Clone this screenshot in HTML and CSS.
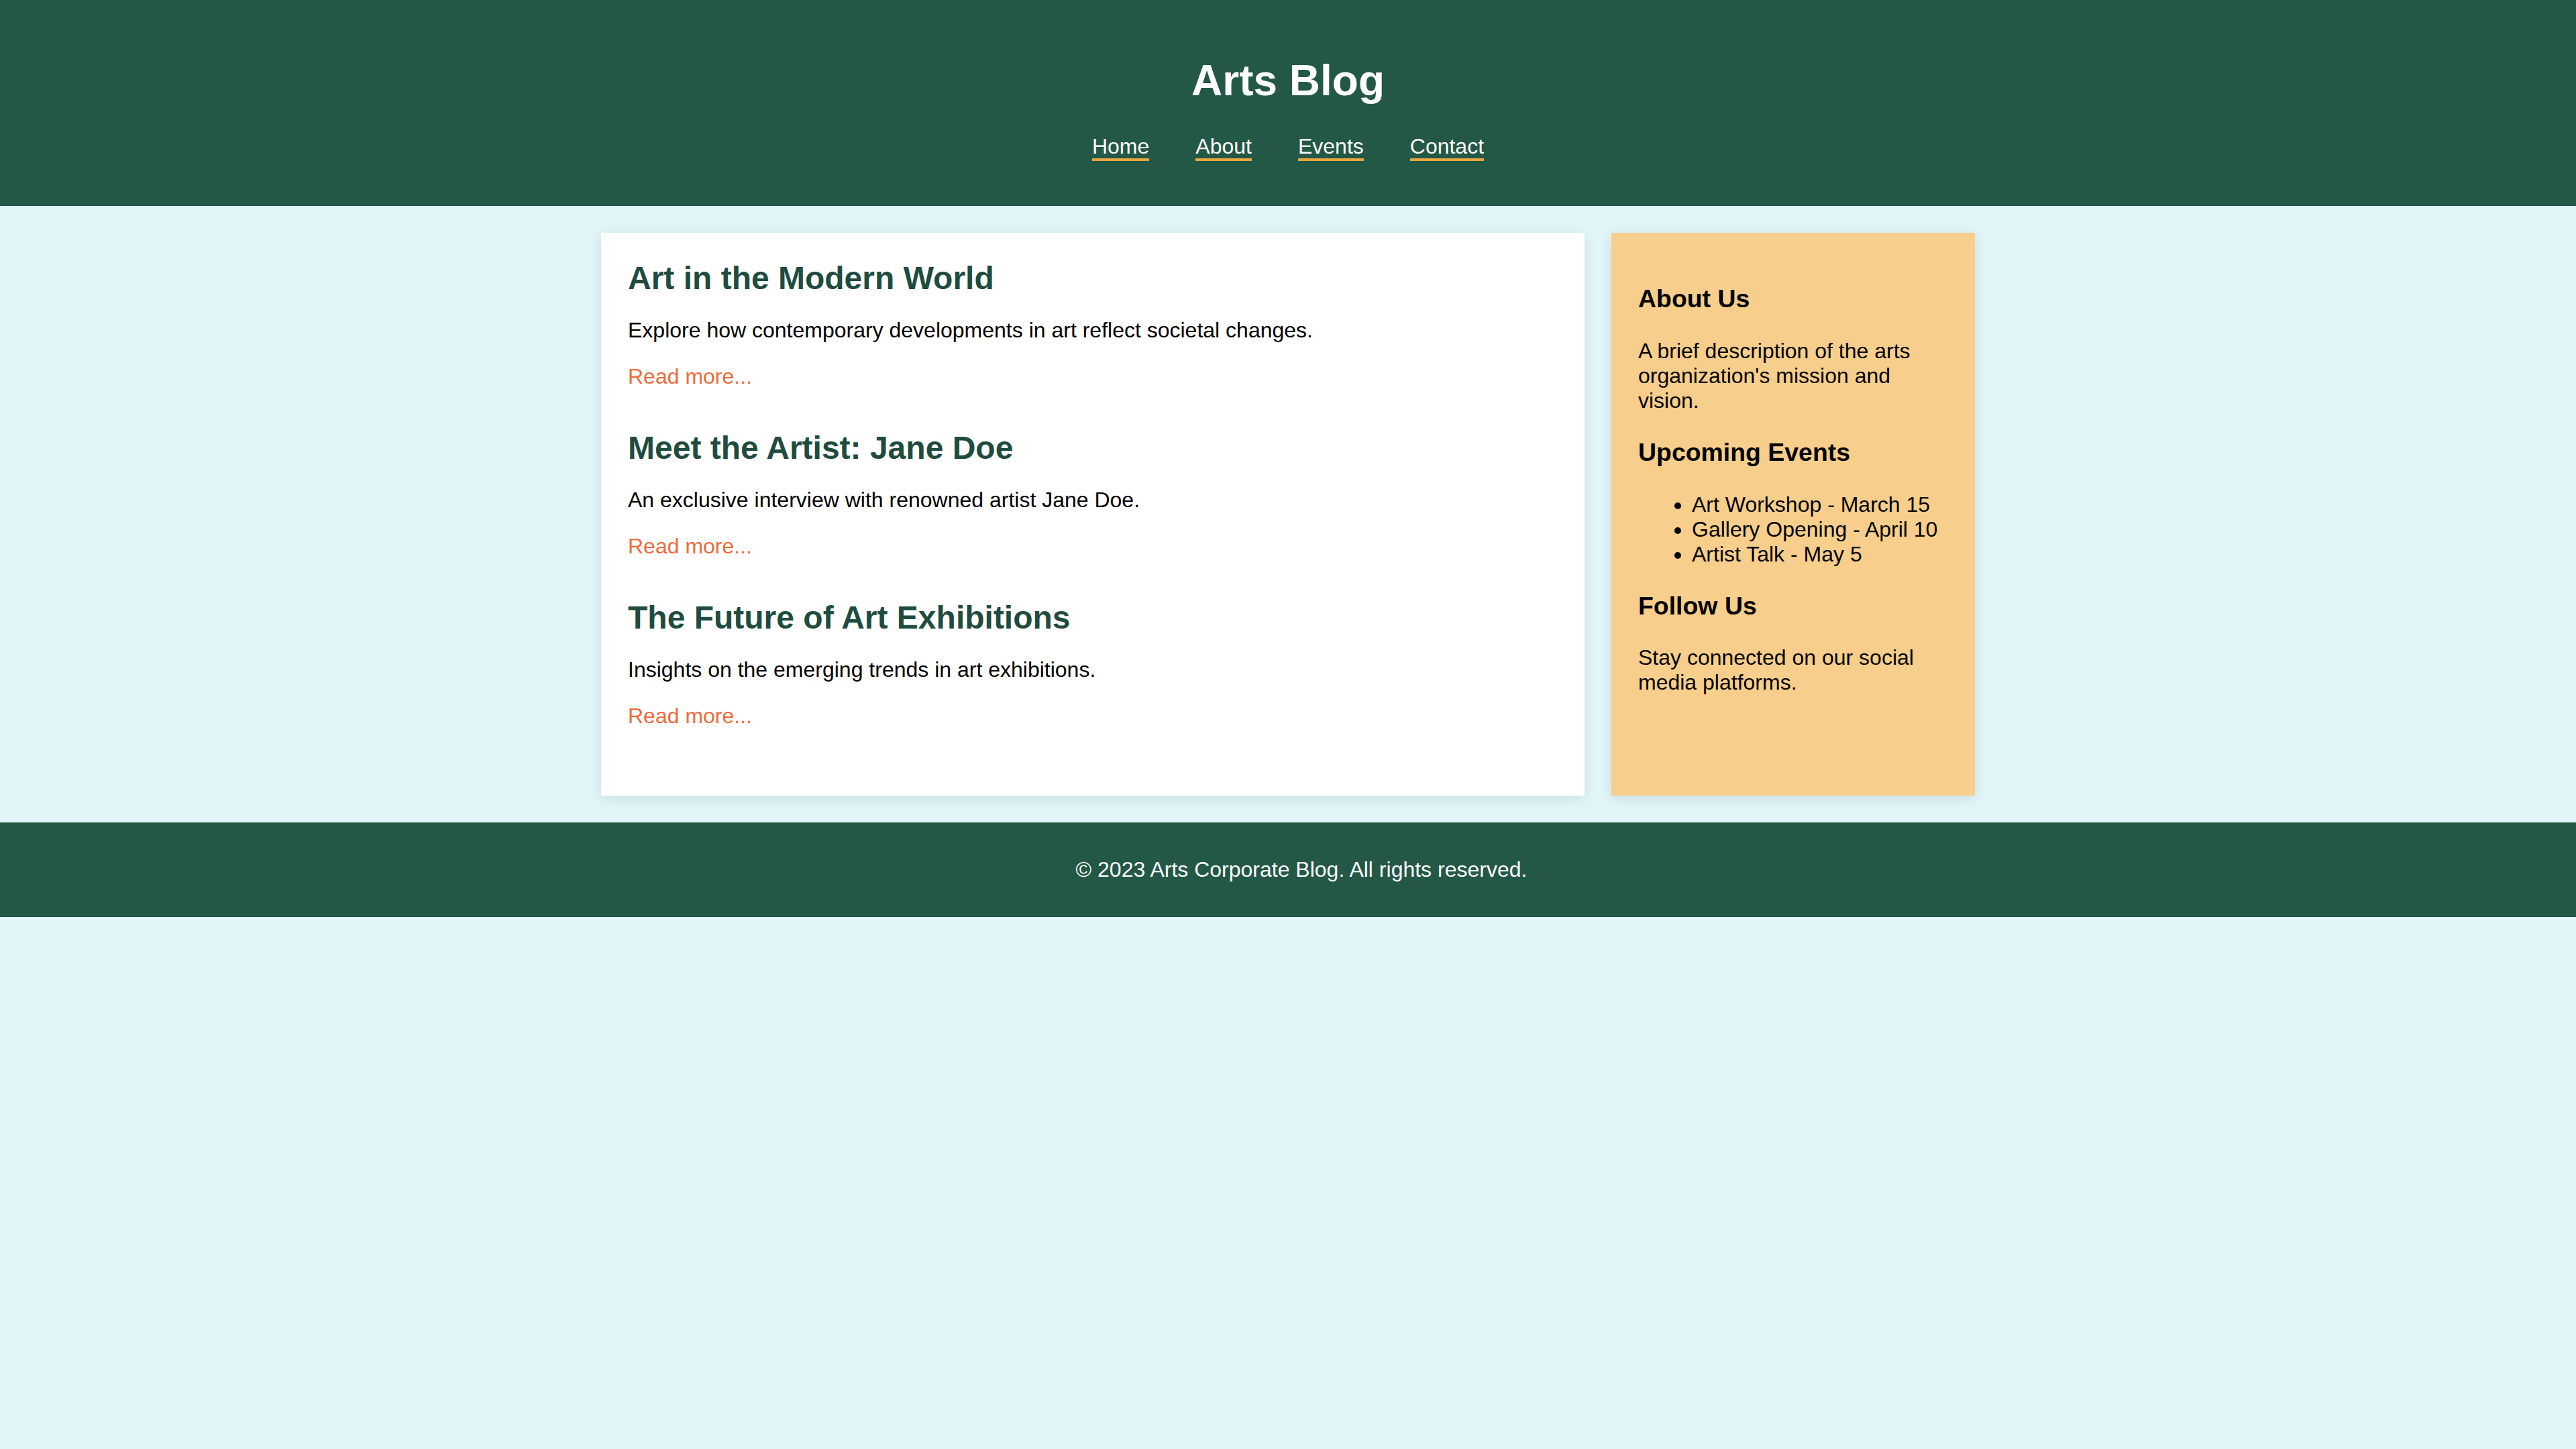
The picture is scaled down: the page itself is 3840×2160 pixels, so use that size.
FILE: index.html
```html
<!DOCTYPE html>
<html lang="en">
<head>
<meta charset="utf-8">
<title>Arts Blog</title>
<link rel="stylesheet" href="styles.css">
</head>
<body>
<header class="site-header">
  <h1 class="site-title">Arts Blog</h1>
  <nav class="site-nav">
    <ul class="nav-list">
      <li class="nav-item"><a class="nav-link" href="#">Home</a></li>
      <li class="nav-item"><a class="nav-link" href="#">About</a></li>
      <li class="nav-item"><a class="nav-link" href="#">Events</a></li>
      <li class="nav-item"><a class="nav-link" href="#">Contact</a></li>
    </ul>
  </nav>
</header>
<main class="layout">
  <section class="posts">
    <article class="post">
      <h2 class="post-title">Art in the Modern World</h2>
      <p class="post-text">Explore how contemporary developments in art reflect societal changes.</p>
      <p class="post-text"><a class="read-more" href="#">Read more...</a></p>
    </article>
    <article class="post">
      <h2 class="post-title">Meet the Artist: Jane Doe</h2>
      <p class="post-text">An exclusive interview with renowned artist Jane Doe.</p>
      <p class="post-text"><a class="read-more" href="#">Read more...</a></p>
    </article>
    <article class="post">
      <h2 class="post-title">The Future of Art Exhibitions</h2>
      <p class="post-text">Insights on the emerging trends in art exhibitions.</p>
      <p class="post-text"><a class="read-more" href="#">Read more...</a></p>
    </article>
  </section>
  <aside class="sidebar">
    <h3 class="side-title">About Us</h3>
    <p class="side-text">A brief description of the arts organization's mission and vision.</p>
    <h3 class="side-title">Upcoming Events</h3>
    <ul class="event-list">
      <li>Art Workshop - March 15</li>
      <li>Gallery Opening - April 10</li>
      <li>Artist Talk - May 5</li>
    </ul>
    <h3 class="side-title">Follow Us</h3>
    <p class="side-text">Stay connected on our social media platforms.</p>
  </aside>
</main>
<footer class="site-footer">
  <p class="footer-text">&copy; 2023 Arts Corporate Blog. All rights reserved.</p>
</footer>
</body>
</html>
```
FILE: styles.css
```css
html, body {
  margin: 0;
  padding: 0;
}

body {
  background: #e2f5f9;
  font-family: "Liberation Sans", Arial, Helvetica, sans-serif;
  font-size: 32px;
  color: #000;
}

.site-header {
  background: #235846;
  color: #fff;
  text-align: center;
  padding: 40px 0 38px;
}

.site-title {
  font-size: 64px;
  font-weight: bold;
  margin: 42.88px 0;
}

.nav-list {
  list-style: none;
  margin: 32px 0;
  padding: 0;
  display: flex;
  justify-content: center;
  gap: 69px;
}

.nav-link {
  color: #fff;
  text-decoration: none;
  border-bottom: 4px solid #e9a63f;
}

.layout {
  display: flex;
  justify-content: center;
  align-items: stretch;
  gap: 40px;
  padding: 40px 0;
}

.posts {
  box-sizing: border-box;
  width: 1466px;
  background: #fff;
  padding: 40px;
  box-shadow: 0 4px 20px rgba(0, 0, 0, 0.1);
}

.post {
  margin-bottom: 60px;
}

.post-title {
  font-size: 48px;
  font-weight: bold;
  color: #1f4c3f;
  margin: 0 0 20px;
}

.post-text {
  margin: 32px 0;
}

.read-more {
  color: #ef6a3a;
  text-decoration: none;
}

.sidebar {
  box-sizing: border-box;
  width: 542px;
  background: #f7ce8b;
  padding: 40px;
  box-shadow: 0 4px 20px rgba(0, 0, 0, 0.1);
}

.side-title {
  font-size: 37.44px;
  font-weight: bold;
  margin: 37.44px 0;
}

.side-text {
  margin: 32px 0;
}

.event-list {
  margin: 32px 0;
  padding-left: 80px;
}

.site-footer {
  background: #235846;
  color: #fff;
  text-align: center;
  padding: 20px 0 20px 40px;
}

.footer-text {
  margin: 32px 0;
}
```
